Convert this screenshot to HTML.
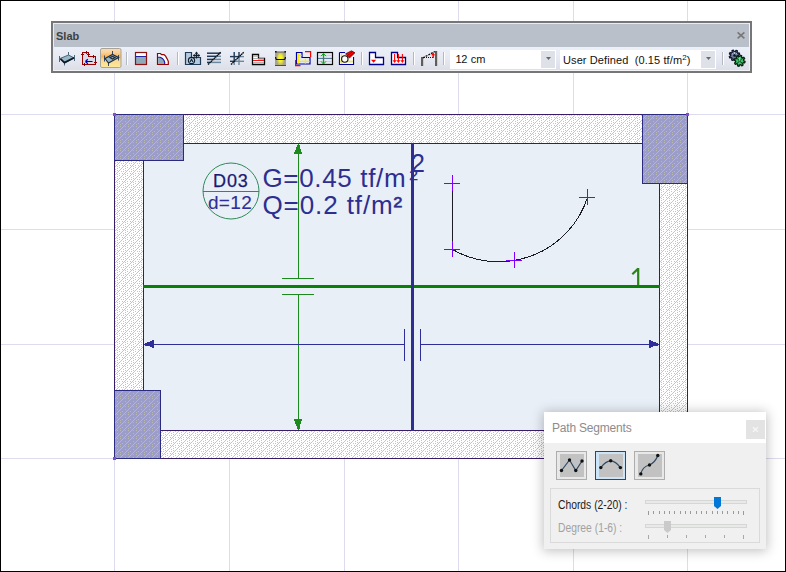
<!DOCTYPE html>
<html><head><meta charset="utf-8">
<style>
html,body{margin:0;padding:0;background:#fff;}
body{width:786px;height:572px;position:relative;overflow:hidden;font-family:"Liberation Sans",sans-serif;}
.frame{position:absolute;left:0;top:0;width:786px;height:572px;box-sizing:border-box;border:1px solid #000;pointer-events:none;z-index:50;}
svg.draw{position:absolute;left:0;top:0;}
.abs{position:absolute;}
</style></head>
<body>
<svg class="draw" width="786" height="572" viewBox="0 0 786 572" shape-rendering="crispEdges">
  <defs>
    <pattern id="hatchW" patternUnits="userSpaceOnUse" width="8" height="8">
      <rect width="8" height="8" fill="#ffffff"/>
      <path fill="#c4c4c4" d="M1 0h1v1h-1zM0 1h1v1h-1zM7 2h1v1h-1zM6 3h1v1h-1zM5 4h1v1h-1zM4 5h1v1h-1zM3 6h1v1h-1zM2 7h1v1h-1zM5 0h1v1h-1zM3 1h1v1h-1zM5 2h1v1h-1zM1 3h1v1h-1zM3 3h1v1h-1zM2 5h1v1h-1zM7 5h1v1h-1zM5 6h1v1h-1zM7 7h1v1h-1z"/>
    </pattern>
    <pattern id="hatchC" patternUnits="userSpaceOnUse" width="8" height="8">
      <rect width="8" height="8" fill="#9c9cc9"/>
      <path fill="#b8b8b4" d="M1 0h1v1h-1zM0 1h1v1h-1zM7 2h1v1h-1zM6 3h1v1h-1zM5 4h1v1h-1zM4 5h1v1h-1zM3 6h1v1h-1zM2 7h1v1h-1zM5 1h1v1h-1zM2 3h1v1h-1zM0 4h1v1h-1zM0 6h1v1h-1zM5 6h1v1h-1z"/>
    </pattern>
  </defs>
  <!-- grid -->
  <g fill="#dcdcee">
    <rect x="114" y="0" width="1" height="572"/>
    <rect x="229" y="0" width="1" height="572"/>
    <rect x="344" y="0" width="1" height="572"/>
    <rect x="458" y="0" width="1" height="572"/>
    <rect x="573" y="0" width="1" height="572"/>
    <rect x="687" y="0" width="1" height="572"/>
    <rect x="0" y="114" width="786" height="1"/>
    <rect x="0" y="229" width="786" height="1"/>
    <rect x="0" y="344" width="786" height="1"/>
    <rect x="0" y="458" width="786" height="1"/>
  </g>
  <!-- walls -->
  <rect x="114" y="114" width="574" height="345" fill="url(#hatchW)"/>
  <rect x="143" y="143" width="517" height="288" fill="#e9eff7"/>
  <g fill="none" stroke="#381c68" stroke-width="1">
    <rect x="114.5" y="114.5" width="573" height="344"/>
    <rect x="143.5" y="143.5" width="516" height="287"/>
  </g>
  <!-- columns -->
  <g fill="url(#hatchC)" stroke="#2a2a80" stroke-width="1.5">
    <rect x="114.5" y="114.5" width="69" height="46"/>
    <rect x="642.5" y="114.5" width="45" height="69"/>
    <rect x="114.5" y="390.5" width="46" height="68"/>
  </g>
  <g fill="#8a4ad8">
    <rect x="113" y="113" width="3" height="3"/>
    <rect x="686" y="113" width="3" height="3"/>
    <rect x="113" y="457" width="3" height="3"/>
  </g>
  <!-- axis lines -->
  <rect x="143" y="285" width="517" height="3" fill="#0a800a"/>
  <rect x="411" y="143" width="3" height="288" fill="#2e2e90"/>
  <!-- green dimension -->
  <g fill="#1c8a1c">
    <rect x="298" y="150" width="1" height="129"/>
    <rect x="298" y="294" width="1" height="130"/>
    <rect x="282" y="278" width="32" height="1"/>
    <rect x="282" y="294" width="32" height="1"/>
  </g>
  <g fill="#1c8a1c">
    <rect x="298" y="144" width="1" height="1"/><rect x="297" y="145" width="3" height="2"/><rect x="296" y="147" width="4" height="2"/><rect x="296" y="149" width="5" height="1"/><rect x="295" y="150" width="6" height="2"/><rect x="294" y="152" width="8" height="2"/>
    <rect x="294" y="419" width="8" height="2"/><rect x="295" y="421" width="6" height="3"/><rect x="296" y="424" width="4" height="2"/><rect x="297" y="426" width="3" height="3"/><rect x="298" y="429" width="1" height="1"/>
  </g>
  <!-- blue dimension -->
  <g fill="#2e2e9a">
    <rect x="150" y="344" width="254" height="1"/>
    <rect x="420" y="344" width="232" height="1"/>
    <rect x="404" y="329" width="1" height="32"/>
    <rect x="420" y="329" width="1" height="32"/>
  </g>
  <g fill="#2e2e9a">
    <rect x="144" y="344" width="1" height="1"/><rect x="145" y="343" width="2" height="3"/><rect x="147" y="342" width="3" height="4"/><rect x="150" y="341" width="2" height="6"/><rect x="152" y="340" width="2" height="8"/>
    <rect x="649" y="340" width="2" height="8"/><rect x="651" y="341" width="2" height="6"/><rect x="653" y="342" width="3" height="4"/><rect x="656" y="343" width="2" height="3"/><rect x="658" y="344" width="1" height="1"/>
  </g>
  <!-- label circle -->
  <g shape-rendering="geometricPrecision">
    <circle cx="231" cy="191" r="28" fill="none" stroke="#2e8a5a" stroke-width="1"/>
    <rect x="203" y="191" width="56" height="1" fill="#2e8a5a" shape-rendering="crispEdges"/>
    <!-- curve -->
    <path d="M452.5 184 L452.5 249.5 A93.3 93.3 0 0 0 587.5 197.5" fill="none" stroke="#1c1c24" stroke-width="1" shape-rendering="crispEdges"/>
  </g>
  <g fill="#8000ff">
    <rect x="444" y="183" width="16" height="1"/><rect x="452" y="175" width="1" height="16"/>
    <rect x="444" y="249" width="16" height="1"/><rect x="452" y="241" width="1" height="16"/>
    <rect x="506" y="260" width="16" height="1"/><rect x="514" y="252" width="1" height="16"/>
    <rect x="579" y="197" width="16" height="1"/><rect x="587" y="189" width="1" height="16"/>
  </g>
  <g font-family="Liberation Sans" shape-rendering="geometricPrecision">
    <text x="213" y="187" font-size="18" fill="#1a1a70" stroke="#1a1a70" stroke-width="0.25" letter-spacing="0.9">D03</text>
    <text x="208" y="209" font-size="19" fill="#2e2e96" stroke="#2e2e96" stroke-width="0.12" letter-spacing="0.3">d=12</text>
    <text x="262.5" y="186.5" font-size="26" fill="#2e2e90" letter-spacing="0.65">G=0.45 tf/m<tspan dx="3">²</tspan></text>
    <text x="262.5" y="213.5" font-size="26" fill="#2e2e90" letter-spacing="0.9">Q=0.2 tf/m<tspan stroke="#2e2e90" stroke-width="0.5">²</tspan></text>
    <text x="411" y="172" font-size="25" fill="#2e2e90">2</text>
    <path d="M632.3 274.2 L638.2 268.6 M638.2 268 V285" stroke="#2a8418" stroke-width="2.2" fill="none"/>
  </g>
</svg>

<!-- toolbar window -->
<div class="abs" style="left:51px;top:21px;width:701px;height:52px;box-sizing:border-box;border:2px solid #767676;background:#f2f4f8;"></div>
<div class="abs" style="left:53px;top:23px;width:696px;height:1px;background:#e6ebf6;"></div>
<div class="abs" style="left:53px;top:23px;width:1px;height:47px;background:#e6ebf6;"></div>
<div class="abs" style="left:54px;top:24px;width:695px;height:23px;background:#bac0ca;"></div>
<div class="abs" style="left:56px;top:30px;font-size:11px;font-weight:bold;color:#404040;letter-spacing:0px;">Slab</div>
<div class="abs" style="left:54px;top:47px;width:695px;height:23px;background:linear-gradient(#ecf0f8,#e6e9f2 50%,#dcdfe7);"></div>
<!-- combos -->
<div class="abs" style="left:450px;top:50px;width:106px;height:19px;background:#fff;"></div>
<div class="abs" style="left:541px;top:51px;width:14px;height:17px;background:#dee1e7;"></div>
<div class="abs" style="left:455.5px;top:53px;font-size:11px;color:#111;letter-spacing:-0.3px;">12</div><div class="abs" style="left:470.8px;top:53px;font-size:11px;color:#111;letter-spacing:-0.1px;">cm</div>
<div class="abs" style="left:560px;top:50px;width:156px;height:19px;background:#fff;"></div>
<div class="abs" style="left:701px;top:51px;width:14px;height:17px;background:#dee1e7;"></div>
<div class="abs" style="left:563px;top:54px;font-size:11px;color:#111;letter-spacing:0.1px;white-space:nowrap;">User Defined&nbsp; (0.15 tf/m<sup style="font-size:8px;vertical-align:0;position:relative;top:-4px;">2</sup>)</div>
<svg class="abs" style="left:0;top:0;" width="786" height="80" viewBox="0 0 786 80">
  <!-- close x -->
  <path d="M737.6 32.4 L744.4 38.4 M744.4 32.4 L737.6 38.4" stroke="#777" stroke-width="1.6" fill="none"/>
  <!-- combo arrows -->
  <path d="M546 57 L551 57 L548.5 60 Z" fill="#6a6a6a"/>
  <path d="M706 57 L711 57 L708.5 60 Z" fill="#6a6a6a"/>
  <!-- separators -->
  <g shape-rendering="crispEdges">
    <rect x="126" y="52" width="1" height="13" fill="#b4b8c0"/><rect x="127" y="52" width="1" height="13" fill="#fff"/>
    <rect x="177" y="52" width="1" height="13" fill="#b4b8c0"/><rect x="178" y="52" width="1" height="13" fill="#fff"/>
    <rect x="361" y="52" width="1" height="13" fill="#b4b8c0"/><rect x="362" y="52" width="1" height="13" fill="#fff"/>
    <rect x="413" y="52" width="1" height="13" fill="#b4b8c0"/><rect x="414" y="52" width="1" height="13" fill="#fff"/>
    <rect x="443" y="52" width="1" height="13" fill="#b4b8c0"/><rect x="444" y="52" width="1" height="13" fill="#fff"/>
    <rect x="722" y="52" width="1" height="13" fill="#b4b8c0"/><rect x="723" y="52" width="1" height="13" fill="#fff"/>
  </g>
  <!-- highlighted button -->
  <defs>
    <linearGradient id="hl" x1="0" y1="0" x2="0" y2="1">
      <stop offset="0" stop-color="#fcdcb4"/><stop offset="0.2" stop-color="#fbd29c"/><stop offset="0.42" stop-color="#f8b458"/><stop offset="0.6" stop-color="#fbd690"/><stop offset="1" stop-color="#fde99a"/>
    </linearGradient>
  </defs>
  <rect x="100.5" y="48.5" width="20.5" height="19" rx="1.5" fill="url(#hl)" stroke="#a8a49a"/>
  <!-- icon1 slab -->
  <g stroke="#50687a" stroke-width="1" fill="none">
    <path d="M59.5 56 V62 M74.5 55 V61 M68.5 52 V55.5 M64.5 60 V65.5" />
  </g>
  <path d="M60 58.5 L68.5 55 L74.2 58 L64.5 63 Z" fill="#98b6c6" stroke="#3c5870" stroke-width="0.9"/>
  <path d="M60.5 58.8 L64.5 62.6 L74 57.8" fill="none" stroke="#0c1a26" stroke-width="1.7"/>
  <!-- icon2 -->
  <path d="M83 53 H88 V57 H95 V64 H83 Z" fill="#d6dcea"/>
  <g fill="#980000" shape-rendering="crispEdges">
    <rect x="82" y="52" width="7" height="1"/><rect x="88" y="52" width="1" height="5"/><rect x="88" y="56" width="8" height="1"/>
    <rect x="95" y="56" width="1" height="9"/><rect x="82" y="64" width="14" height="1"/><rect x="82" y="52" width="1" height="13"/>
    <rect x="86" y="51" width="1" height="3"/><rect x="81" y="54" width="3" height="1"/><rect x="87" y="54" width="3" height="1"/>
    <rect x="93" y="55" width="1" height="3"/><rect x="94" y="62" width="3" height="1"/><rect x="84" y="63" width="1" height="3"/>
  </g>
  <path d="M85.5 61.5 H92.5 M85.5 61.5 L87.8 59.3 M85.5 61.5 L87.8 63.7" stroke="#0000a8" stroke-width="1.2" fill="none"/>
  <!-- icon3 slab w hole -->
  <g stroke="#34495a" stroke-width="1" fill="none">
    <path d="M104.5 55.5 V61.5 M118.5 55 V60.5 M112.5 51 V54.5 M108.5 61 V66" />
  </g>
  <path d="M105 58.5 L112.5 54.5 L118.5 57.5 L108.5 63 Z" fill="#9ab6c4" stroke="#1e2e3c" stroke-width="1.2"/>
  <path d="M110 57.5 L112.5 56.5 L115 57.5 L112.5 59 Z" fill="#f9c070" stroke="#1e2e3c" stroke-width="1.2"/>
  <!-- icon4 -->
  <rect x="135.5" y="52.5" width="11" height="12" fill="#8eaab8" stroke="#8b1010" stroke-width="1.2"/>
  <rect x="136.2" y="53.2" width="9.6" height="2.8" fill="#fff"/>
  <rect x="136" y="56" width="10" height="1" fill="#2020a0"/>
  <!-- icon5 quarter -->
  <path d="M157.5 64.5 V53.5 H160.5 L161.5 54.6 H164 L165.6 56.2 L167 58.6 L168.3 61.3 V64.5 Z" fill="#fff" stroke="#980000" stroke-width="1.2"/>
  <path d="M158.1 57.3 H160.3 L162.4 58.4 L163.9 60.2 L164.7 62.4 V64 H158.1 Z" fill="#8eaab8"/>
  <path d="M158.1 57.3 H160.3 L162.4 58.4 L163.9 60.2 L164.7 62.4 V64" fill="none" stroke="#1010b0" stroke-width="1.1"/>
  <!-- icon6 -->
  <path d="M185.5 52.5 H191.5 V57.5 H200.5 V64.5 H185.5 Z" fill="#b4cae0" stroke="#1e3a56" stroke-width="1.2"/>
  <circle cx="191.5" cy="60.5" r="3.1" fill="#b4cae0" stroke="#10202e" stroke-width="1.1"/>
  <path d="M190 62 L191.5 59.3 L193 62" stroke="#10202e" fill="none" stroke-width="1.1"/>
  <path d="M196.5 52.5 V58.5 M193.5 55.5 H199.5" stroke="#10202e" stroke-width="1.3"/>
  <path d="M194.8 53.8 L196.5 51.6 L198.2 53.8 Z M194.8 54 L192.8 55.5 L194.8 57 Z M198.2 54 L200.2 55.5 L198.2 57 Z" fill="#10202e"/>
  <!-- icon7 -->
  <g stroke-width="1.5">
    <path d="M207 53.2 H220.5" stroke="#1e3a56"/>
    <path d="M207 56.3 H216.5" stroke="#1e3a56"/><path d="M216.5 56.3 H221" stroke="#6a88a0"/>
    <path d="M207 59.4 H213.3" stroke="#1e3a56"/><path d="M213.3 59.4 H221" stroke="#6a88a0"/>
    <path d="M207 62.4 H210.2" stroke="#1e3a56"/><path d="M210.2 62.4 H221" stroke="#6a88a0"/>
  </g>
  <path d="M208 64.5 L221 52" stroke="#050a10" stroke-width="1.35" stroke-dasharray="1.6 0.4"/>
  <!-- icon8 -->
  <g stroke-width="1.4">
    <path d="M234.2 52 V61.4" stroke="#1e3a56"/><path d="M234.2 61.4 V65" stroke="#6a88a0"/>
    <path d="M239 52 V56.8" stroke="#1e3a56"/><path d="M239 56.8 V65" stroke="#6a88a0"/>
    <path d="M230 56.6 H239.2" stroke="#1e3a56"/><path d="M239.2 56.6 H244" stroke="#6a88a0"/>
    <path d="M230 61.3 H234.3" stroke="#1e3a56"/><path d="M234.3 61.3 H244" stroke="#6a88a0"/>
  </g>
  <path d="M231 64.5 L244 52" stroke="#050a10" stroke-width="1.35" stroke-dasharray="1.6 0.4"/>
  <!-- icon9 -->
  <path d="M252.5 54.5 H258.5 V58.5 H264.5 V64.5 H252.5 Z" fill="#fff" stroke="#080808" stroke-width="1.3"/>
  <path d="M253 56.3 H258.5 M253 58.5 H264 M253 62.5 H264" stroke="#a0a0a0" stroke-width="0.8"/>
  <path d="M253 60.5 H264" stroke="#ff1010" stroke-width="1"/>
  <!-- icon10 -->
  <defs><radialGradient id="yg" cx="0.5" cy="0.5" r="0.5" fx="0.5" fy="0.5" gradientTransform="translate(0.5 0.5) scale(0.75 1) translate(-0.5 -0.5)"><stop offset="0" stop-color="#ffff10"/><stop offset="0.45" stop-color="#f0ee30"/><stop offset="1" stop-color="#a8a488"/></radialGradient></defs>
  <rect x="275" y="51" width="11" height="15" fill="#a8a488"/>
  <rect x="275" y="51" width="11" height="15" fill="url(#yg)"/>
  <rect x="276" y="52" width="9" height="1" fill="#8a8870"/>
  <rect x="275" y="65" width="11" height="1" fill="#505040"/>
  <path d="M275.6 57 Q275.6 59.5 277 59.5 H284 Q285.4 59.5 285.4 57" stroke="#101010" stroke-width="1.2" fill="none"/>
  <g fill="#181818"><rect x="275" y="51" width="1.6" height="1.6"/><rect x="284.4" y="51" width="1.6" height="1.6"/></g>
  <!-- icon11 -->
  <path d="M296.5 52.5 H302 V57.5 H310 V64 H296.5 Z" fill="#e4e6f4" stroke="#0000a0" stroke-width="1.2"/>
  <path d="M298.4 53.2 V63.5 M297.2 55.4 H301.5 M297.2 61.4 H309.5 M305.4 58.2 V63.5" stroke="#f8f000" stroke-width="1.2"/>
  <path d="M305 51.6 H310.6 V57" stroke="#ff0000" stroke-width="1.2" fill="none"/>
  <path d="M295.6 60 V65.6 H300.5" stroke="#ff0000" stroke-width="1.2" fill="none"/>
  <!-- icon12 -->
  <rect x="317.5" y="52.5" width="15" height="12" fill="#e6e9f3" stroke="#0a0a0a" stroke-width="1.2"/>
  <path d="M318 55.5 H332 M318 61.5 H332" stroke="#c8ccd8" stroke-width="0.8"/>
  <path d="M318 58.4 H332" stroke="#4a6a90" stroke-width="1"/>
  <path d="M323.5 54 V63.5" stroke="#10a020" stroke-width="1.3"/>
  <path d="M321 56.2 L323.5 53.4 L326 56.2 M321 61.3 L323.5 64 L326 61.3" stroke="#10a020" stroke-width="1" fill="none"/>
  <!-- icon13 -->
  <path d="M339.5 52.5 H345 M349 57.5 H353.5 V64.5 H339.5 V52.5" fill="#f6f6ff" stroke="#0000a0" stroke-width="1.2"/>
  <rect x="340" y="53" width="13" height="11" fill="#f4f4fc"/>
  <path d="M341.5 53 V64 M340 61.5 H353" stroke="#f8f000" stroke-width="1.3"/>
  <path d="M345.5 53.8 L351.5 50.8 L355 52.8 L349.5 58 Z" fill="#ff0000" stroke="#180000" stroke-width="0.6"/>
  <path d="M347.3 55.8 L352.6 51.6 M348.8 57 L354 52.6" stroke="#300000" stroke-width="0.8" stroke-dasharray="0.8 0.8"/>
  <circle cx="344.8" cy="59" r="3.2" fill="#fbfbfb" stroke="#101010" stroke-width="1.1"/>
  <!-- icon14 -->
  <path d="M369.5 52.5 H375.5 V57.5 H383.5 V64.5 H369.5 Z" fill="#fff" stroke="#000090" stroke-width="1.3"/>
  <path d="M371 59.8 H376.2 L373.6 62.8 Z" fill="#ff0000"/>
  <!-- icon15 -->
  <path d="M391.5 52.5 H397.5 V57.5 H405.5 V64.5 H391.5 Z" fill="#fff" stroke="#000090" stroke-width="1.3"/>
  <path d="M394.6 54 V61 M398.4 54 V61 M402.4 54 V61" stroke="#ff0000" stroke-width="1.1"/>
  <path d="M392.6 60.3 H396.6 L394.6 63 Z M396.4 60.3 H400.4 L398.4 63 Z M400.4 60.3 H404.4 L402.4 63 Z" fill="#ff0000"/>
  <!-- icon16 -->
  <rect x="421" y="57" width="2.2" height="9" fill="#5e5e56"/>
  <rect x="435" y="51" width="2.2" height="15" fill="#5e5e56"/>
  <path d="M423 57.8 L435 51.5" stroke="#101010" stroke-width="1.3" stroke-dasharray="2 1"/>
  <path d="M424 57.5 H433" stroke="#101010" stroke-width="1.1" stroke-dasharray="1 1"/>
  <path d="M433.2 54 V58" stroke="#ff0000" stroke-width="1.4"/>
  <path d="M431.2 55.2 L433.2 52.2 L435 55.2 Z" fill="#ff0000"/>
  <!-- gear -->
  <g>
    <path d="M738.32 56.17 L739.57 56.94 L738.94 58.29 L737.55 57.83 L736.65 58.65 L737.00 60.07 L735.60 60.59 L734.94 59.27 L733.73 59.22 L732.96 60.47 L731.61 59.84 L732.07 58.45 L731.25 57.55 L729.83 57.90 L729.31 56.50 L730.63 55.84 L730.68 54.63 L729.43 53.86 L730.06 52.51 L731.45 52.97 L732.35 52.15 L732.00 50.73 L733.40 50.21 L734.06 51.53 L735.27 51.58 L736.04 50.33 L737.39 50.96 L736.93 52.35 L737.75 53.25 L739.17 52.90 L739.69 54.30 L738.37 54.96 Z" fill="#6a7c98" stroke="#10142c" stroke-width="1.3" stroke-linejoin="round"/>
    <path d="M732 53.5 L734.5 55.4 L737 53.2 M734.5 52 V55.4" stroke="#b8cce0" stroke-width="0.9" fill="none"/>
    <circle cx="734.5" cy="55.4" r="1.3" fill="#10142c"/>
    <path d="M743.70 60.80 L745.08 61.32 L744.71 62.82 L743.25 62.66 L742.50 63.70 L743.11 65.04 L741.78 65.85 L740.87 64.70 L739.60 64.90 L739.08 66.28 L737.58 65.91 L737.74 64.45 L736.70 63.70 L735.36 64.31 L734.55 62.98 L735.70 62.07 L735.50 60.80 L734.12 60.28 L734.49 58.78 L735.95 58.94 L736.70 57.90 L736.09 56.56 L737.42 55.75 L738.33 56.90 L739.60 56.70 L740.12 55.32 L741.62 55.69 L741.46 57.15 L742.50 57.90 L743.84 57.29 L744.65 58.62 L743.50 59.53 Z" fill="#3cc46a" stroke="#0a2010" stroke-width="1.3" stroke-linejoin="round"/>
    <path d="M736.6 58 L739.6 61 L742.6 58 M736.6 63.8 L739.6 61 L742.6 63.8" stroke="#103018" stroke-width="1" fill="none"/>
    <path d="M739.6 57 V61" stroke="#a8d8e0" stroke-width="0.8"/>
  </g>
</svg>

<!-- path segments panel -->
<div class="abs" style="left:544px;top:412px;width:222px;height:137px;background:#f0f0f0;box-shadow:0 1px 11px 1px rgba(0,0,0,0.25);"></div>
<div class="abs" style="left:544px;top:412px;width:222px;height:31px;background:#fff;"></div>
<div class="abs" style="left:552px;top:421px;font-size:12px;color:#8c8c8c;letter-spacing:-0.2px;">Path Segments</div>
<div class="abs" style="left:746px;top:420px;width:19px;height:19px;background:#e3e3e3;"></div>
<div class="abs" style="left:550px;top:488px;width:210px;height:55px;box-sizing:border-box;border:1px solid #dadada;"></div>
<div class="abs" style="left:558px;top:498px;font-size:12px;color:#1a1a1a;transform:scaleX(0.86);transform-origin:0 0;white-space:nowrap;">Chords (2-20) :</div>
<div class="abs" style="left:558px;top:521px;font-size:12px;color:#a2a2a2;transform:scaleX(0.86);transform-origin:0 0;white-space:nowrap;">Degree (1-6) :</div>
<svg class="abs" style="left:0;top:0;" width="786" height="572" viewBox="0 0 786 572">
  <path d="M753 427.3 L757.8 431.7 M757.8 427.3 L753 431.7" stroke="#f6f6f6" stroke-width="1.3"/>
  <!-- buttons -->
  <g shape-rendering="crispEdges">
    <rect x="556.5" y="451.5" width="30" height="28" fill="#e8e8e8" stroke="#adadad"/>
    <rect x="560" y="454" width="24" height="23" fill="#c2c2c2"/>
    <rect x="595.5" y="451.5" width="30" height="28" fill="#cce4f7" stroke="#005499" stroke-width="1.3"/>
    <rect x="599" y="454" width="24" height="23" fill="#c2c2c2"/>
    <rect x="634.5" y="451.5" width="30" height="28" fill="#e8e8e8" stroke="#adadad"/>
    <rect x="638" y="454" width="24" height="23" fill="#c2c2c2"/>
  </g>
  <g stroke="#2e4a66" stroke-width="1.2" fill="none">
    <path d="M561.5 470.5 L569.5 460 L575.8 470.5 L582 461"/>
    <path d="M600.8 467.6 Q610.7 454 620.4 467.6"/>
    <path d="M640.8 473.9 Q642.5 466.5 649.5 465 Q655.5 462 657.8 455.5"/>
  </g>
  <g fill="#101010">
    <circle cx="561.5" cy="470.5" r="1.7"/><circle cx="569.5" cy="460" r="1.7"/><circle cx="575.8" cy="470.5" r="1.7"/><circle cx="582" cy="461" r="1.7"/>
    <circle cx="600.8" cy="467.6" r="1.7"/><circle cx="610.7" cy="460.8" r="1.7"/><circle cx="620.4" cy="467.6" r="1.7"/>
    <circle cx="640.8" cy="473.9" r="1.7"/><circle cx="649.5" cy="465" r="1.7"/><circle cx="657.8" cy="455.5" r="1.7"/>
  </g>
  <!-- sliders -->
  <g shape-rendering="crispEdges">
    <rect x="645.5" y="500.5" width="101" height="3" fill="#e7eae7" stroke="#d6d6d6"/>
    <rect x="645.5" y="524.5" width="101" height="3" fill="#e7eae7" stroke="#d6d6d6"/>
  </g>
  <path d="M714 497 H721 V506 L717.5 509 L714 506 Z" fill="#0078d7"/>
  <path d="M664 521 H671 V530 L667.5 533 L664 530 Z" fill="#cacaca"/>
  <g fill="#a8a8a8" shape-rendering="crispEdges" id="ticks1"></g>
  <g fill="#b4b4b4" shape-rendering="crispEdges" id="ticks2"></g>
<rect x="648" y="511" width="1" height="4" fill="#9a9a9a" shape-rendering="crispEdges"/><rect x="653" y="511" width="1" height="3" fill="#9a9a9a" shape-rendering="crispEdges"/><rect x="659" y="511" width="1" height="3" fill="#9a9a9a" shape-rendering="crispEdges"/><rect x="664" y="511" width="1" height="3" fill="#9a9a9a" shape-rendering="crispEdges"/><rect x="669" y="511" width="1" height="3" fill="#9a9a9a" shape-rendering="crispEdges"/><rect x="674" y="511" width="1" height="3" fill="#9a9a9a" shape-rendering="crispEdges"/><rect x="680" y="511" width="1" height="3" fill="#9a9a9a" shape-rendering="crispEdges"/><rect x="685" y="511" width="1" height="3" fill="#9a9a9a" shape-rendering="crispEdges"/><rect x="690" y="511" width="1" height="3" fill="#9a9a9a" shape-rendering="crispEdges"/><rect x="696" y="511" width="1" height="3" fill="#9a9a9a" shape-rendering="crispEdges"/><rect x="701" y="511" width="1" height="3" fill="#9a9a9a" shape-rendering="crispEdges"/><rect x="706" y="511" width="1" height="3" fill="#9a9a9a" shape-rendering="crispEdges"/><rect x="712" y="511" width="1" height="3" fill="#9a9a9a" shape-rendering="crispEdges"/><rect x="717" y="511" width="1" height="3" fill="#9a9a9a" shape-rendering="crispEdges"/><rect x="722" y="511" width="1" height="3" fill="#9a9a9a" shape-rendering="crispEdges"/><rect x="727" y="511" width="1" height="3" fill="#9a9a9a" shape-rendering="crispEdges"/><rect x="733" y="511" width="1" height="3" fill="#9a9a9a" shape-rendering="crispEdges"/><rect x="738" y="511" width="1" height="3" fill="#9a9a9a" shape-rendering="crispEdges"/><rect x="743" y="511" width="1" height="4" fill="#9a9a9a" shape-rendering="crispEdges"/><rect x="648" y="535" width="1" height="4" fill="#a8a8a8" shape-rendering="crispEdges"/><rect x="667" y="535" width="1" height="3" fill="#a8a8a8" shape-rendering="crispEdges"/><rect x="686" y="535" width="1" height="3" fill="#a8a8a8" shape-rendering="crispEdges"/><rect x="705" y="535" width="1" height="3" fill="#a8a8a8" shape-rendering="crispEdges"/><rect x="724" y="535" width="1" height="3" fill="#a8a8a8" shape-rendering="crispEdges"/><rect x="743" y="535" width="1" height="4" fill="#a8a8a8" shape-rendering="crispEdges"/>

</svg>
<div class="frame"></div>
</body></html>
